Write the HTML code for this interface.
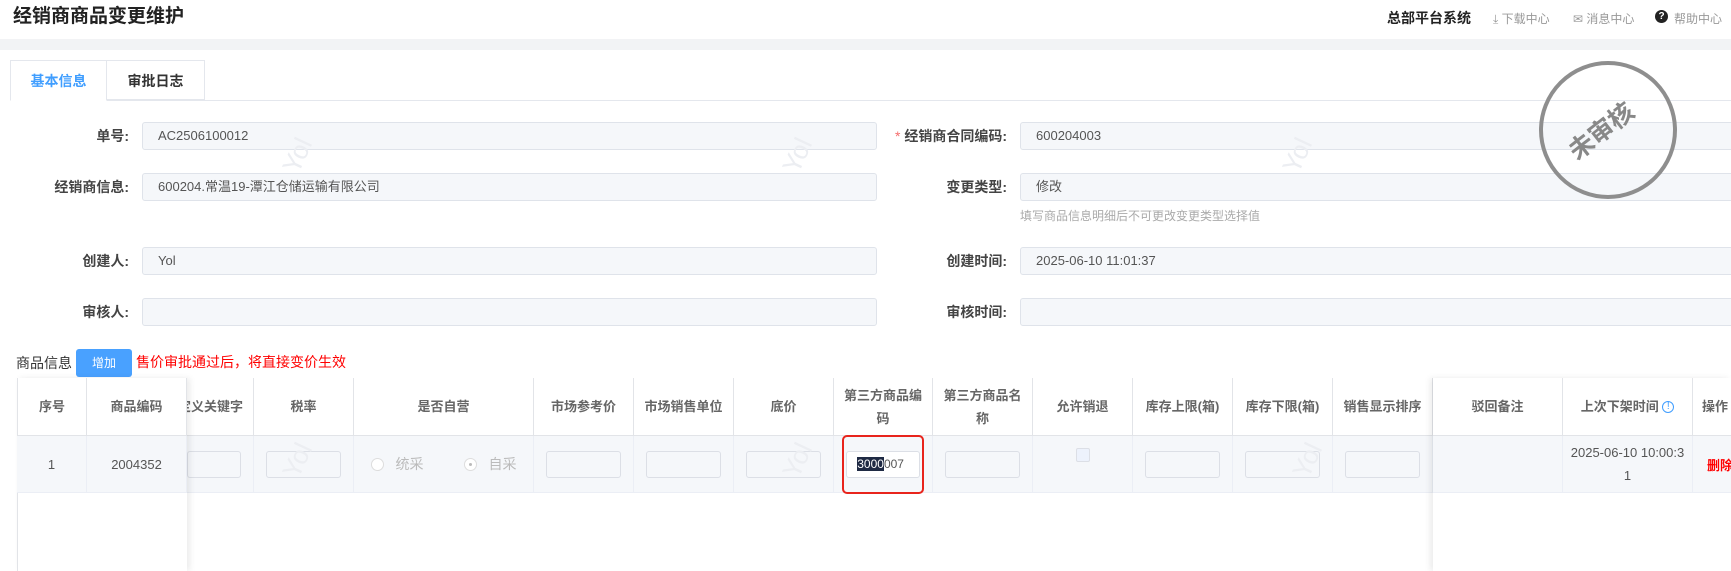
<!DOCTYPE html>
<html><head><meta charset="utf-8"><style>
*{box-sizing:border-box;margin:0;padding:0}
body{width:1731px;height:571px;overflow:hidden;background:#fff;font-family:"Liberation Sans","Noto Sans CJK SC",sans-serif;position:relative;color:#333}
.a{position:absolute;white-space:nowrap}
.lbl{font-size:14px;font-weight:bold;color:#444;text-align:right;width:200px;line-height:28px}
.inp{position:absolute;height:28px;background:#f5f7fa;border:1px solid #dfe3ea;border-radius:3px;font-size:13px;color:#555;padding-left:15px;line-height:26px}
.th{position:absolute;top:378px;height:58px;border-right:1px solid #e2e4e8;border-bottom:1px solid #e2e4e8;font-size:13px;color:#666;font-weight:bold;display:flex;align-items:center;justify-content:center;text-align:center;line-height:23px;background:#fff}
.td{position:absolute;top:436px;height:57px;border-right:1px solid #ebeef5;border-bottom:1px solid #ebeef5;background:#f5f7fa;font-size:13px;color:#555;display:flex;align-items:center;justify-content:center}
.ci{width:75%;height:27px;border:1px solid #dcdfe6;border-radius:3px;background:#f5f7fa}
.wm{position:absolute;color:#eceef2;font-size:26px;transform:rotate(-65deg)}
</style></head><body>
<div class="a" style="left:13px;top:1px;font-size:19px;font-weight:bold;color:#222">经销商商品变更维护</div>
<div class="a" style="left:1387px;top:8px;font-size:14px;font-weight:bold;color:#222">总部平台系统</div>
<div class="a" style="left:1493px;top:10px;font-size:12px;color:#999">⤓ 下载中心</div>
<div class="a" style="left:1573px;top:10px;font-size:12px;color:#999">✉ 消息中心</div>
<div class="a" style="left:1655px;top:10px;width:13px;height:13px;border-radius:50%;background:#222;color:#fff;font-size:10px;font-weight:bold;text-align:center;line-height:13px">?</div>
<div class="a" style="left:1674px;top:10px;font-size:12px;color:#999">帮助中心</div>
<div class="a" style="left:0;top:39px;width:1731px;height:11px;background:#f2f3f5"></div>
<!-- tabs -->
<div class="a" style="left:10px;top:100px;width:1721px;height:1px;background:#e4e7ed"></div>
<div class="a" style="left:10px;top:60px;width:97px;height:41px;border:1px solid #e4e7ed;border-bottom:1px solid #fff;background:#fff;font-size:14px;color:#409eff;font-weight:bold;text-align:center;line-height:40px">基本信息</div>
<div class="a" style="left:107px;top:60px;width:98px;height:40px;border:1px solid #e4e7ed;border-left:none;font-size:14px;color:#333;font-weight:bold;text-align:center;line-height:40px">审批日志</div>
<!-- form -->
<div class="a lbl" style="left:-71px;top:122px">单号:</div>
<div class="inp" style="left:142px;top:122px;width:735px">AC2506100012</div>
<div class="a lbl" style="left:-71px;top:173px">经销商信息:</div>
<div class="inp" style="left:142px;top:173px;width:735px">600204.常温19-潭江仓储运输有限公司</div>
<div class="a lbl" style="left:-71px;top:247px">创建人:</div>
<div class="inp" style="left:142px;top:247px;width:735px">Yol</div>
<div class="a lbl" style="left:-71px;top:298px">审核人:</div>
<div class="inp" style="left:142px;top:298px;width:735px"></div>
<div class="a lbl" style="left:807px;top:122px"><span style="color:#f56c6c;font-weight:normal">* </span>经销商合同编码:</div>
<div class="inp" style="left:1020px;top:122px;width:720px">600204003</div>
<div class="a lbl" style="left:807px;top:173px">变更类型:</div>
<div class="inp" style="left:1020px;top:173px;width:720px">修改</div>
<div class="a" style="left:1020px;top:207px;font-size:12px;color:#aaa">填写商品信息明细后不可更改变更类型选择值</div>
<div class="a lbl" style="left:807px;top:247px">创建时间:</div>
<div class="inp" style="left:1020px;top:247px;width:720px">2025-06-10 11:01:37</div>
<div class="a lbl" style="left:807px;top:298px">审核时间:</div>
<div class="inp" style="left:1020px;top:298px;width:720px"></div>
<div class="a" style="left:1539px;top:61px;width:138px;height:138px;border:4px solid #8e8e8e;border-radius:50%"></div>
<div class="a" style="left:1563px;top:112px;font-size:25px;font-weight:bold;color:#888;transform:rotate(-38deg)">未审核</div>
<div class="wm" style="left:280px;top:140px">Yol</div>
<div class="wm" style="left:780px;top:140px">Yol</div>
<div class="wm" style="left:1280px;top:140px">Yol</div>
<!-- table section -->
<div class="a" style="left:16px;top:353px;font-size:14px;color:#333">商品信息</div>
<div class="a" style="left:76px;top:349px;width:56px;height:28px;background:#49a1ff;border-radius:3px;color:#fff;font-size:12px;text-align:center;line-height:28px">增加</div>
<div class="a" style="left:136px;top:352px;font-size:14px;color:#f00">售价审批通过后，将直接变价生效</div>
<div class="a" style="left:17px;top:378px;width:1714px;height:1px;background:#e2e4e8"></div>
<div class="th" style="left:187px;width:67px;justify-content:flex-end;overflow:hidden;white-space:nowrap"><span style="margin-right:10px">定义关键字</span></div>
<div class="th" style="left:254px;width:100px">税率</div>
<div class="th" style="left:354px;width:180px">是否自营</div>
<div class="th" style="left:534px;width:100px">市场参考价</div>
<div class="th" style="left:634px;width:100px">市场销售单位</div>
<div class="th" style="left:734px;width:100px">底价</div>
<div class="th" style="left:834px;width:99px">第三方商品编<br>码</div>
<div class="th" style="left:933px;width:100px">第三方商品名<br>称</div>
<div class="th" style="left:1033px;width:100px">允许销退</div>
<div class="th" style="left:1133px;width:100px">库存上限(箱)</div>
<div class="th" style="left:1233px;width:100px">库存下限(箱)</div>
<div class="th" style="left:1333px;width:100px">销售显示排序</div>
<div class="td" style="left:187px;width:67px;justify-content:flex-end"><div class="ci" style="width:55px;margin-right:12px"></div></div>
<div class="td" style="left:254px;width:100px"><div class="ci"></div></div>
<div class="td" style="left:354px;width:180px;color:#bbb;font-size:14px"><span style="display:inline-block;width:13px;height:13px;border:1px solid #ddd;border-radius:50%;background:#fff;margin-right:12px"></span>统采<span style="display:inline-block;width:13px;height:13px;border:1px solid #ddd;border-radius:50%;background:#fff;margin:0 12px 0 40px;position:relative"><span style="position:absolute;left:4px;top:4px;width:3px;height:3px;border-radius:50%;background:#bbb"></span></span>自采</div>
<div class="td" style="left:534px;width:100px"><div class="ci"></div></div>
<div class="td" style="left:634px;width:100px"><div class="ci"></div></div>
<div class="td" style="left:734px;width:100px"><div class="ci"></div></div>
<div class="td" style="left:834px;width:99px"><div class="ci" style="background:#fff;font-size:12px;line-height:25px;padding-left:10px;overflow:hidden;color:#555"><span style="background:#1f2a44;color:#fff">3000</span>007</div></div>
<div class="td" style="left:933px;width:100px"><div class="ci"></div></div>
<div class="td" style="left:1033px;width:100px;align-items:flex-start;padding-top:12px"><div style="width:14px;height:14px;border:1px solid #dcdfe6;border-radius:2px;background:#edf2fc"></div></div>
<div class="td" style="left:1133px;width:100px"><div class="ci"></div></div>
<div class="td" style="left:1233px;width:100px"><div class="ci"></div></div>
<div class="td" style="left:1333px;width:100px"><div class="ci"></div></div>
<div class="a" style="left:842px;top:435px;width:82px;height:59px;border:2px solid #e8241c;border-radius:5px"></div>
<!-- left fixed -->
<div class="a" style="left:17px;top:378px;width:170px;height:193px;background:#fff;border-left:1px solid #e2e4e8;box-shadow:3px 0 6px rgba(0,0,0,.08)"></div>
<div class="th" style="left:17px;width:70px;border-left:1px solid #e2e4e8">序号</div>
<div class="th" style="left:87px;width:100px">商品编码</div>
<div class="td" style="left:17px;width:70px">1</div>
<div class="td" style="left:87px;width:100px">2004352</div>
<!-- right fixed -->
<div class="a" style="left:1433px;top:378px;width:298px;height:193px;background:#fff;box-shadow:-3px 0 6px rgba(0,0,0,.08)"></div>
<div class="th" style="left:1433px;width:130px">驳回备注</div>
<div class="th" style="left:1563px;width:130px">上次下架时间&nbsp;<span style="color:#409eff;font-weight:normal;font-size:10px;border:1px solid #409eff;border-radius:50%;width:12px;height:12px;line-height:10px;display:inline-block">!</span></div>
<div class="th" style="left:1693px;width:40px;justify-content:flex-start;padding-left:9px;white-space:nowrap">操作</div>
<div class="td" style="left:1433px;width:130px"></div>
<div class="td" style="left:1563px;width:130px;text-align:center;line-height:23px">2025-06-10 10:00:3<br>1</div>
<div class="td" style="left:1693px;width:40px;justify-content:flex-start;padding-left:14px;color:#f00;font-weight:bold;white-space:nowrap;overflow:hidden">删除</div>
<div class="wm" style="left:280px;top:445px">Yol</div>
<div class="wm" style="left:780px;top:445px">Yol</div>
<div class="wm" style="left:1290px;top:445px">Yol</div>
</body></html>
